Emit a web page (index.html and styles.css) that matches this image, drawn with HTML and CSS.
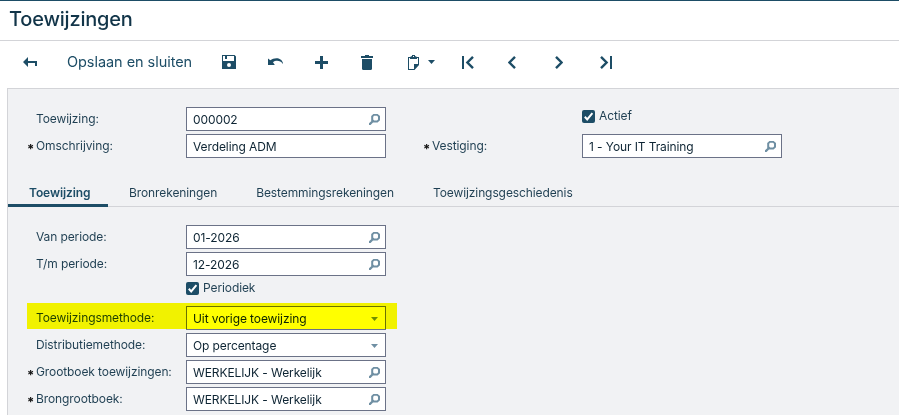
FILE: index.html
```html
<!DOCTYPE html>
<html lang="nl">
<head>
  <meta charset="UTF-8">
  <title>Toewijzingen</title>
  <link rel="stylesheet" href="styles.css">
</head>
<body>

  <svg class="symbols">
    <symbol id="search" viewBox="0 0 12 12">
      <path d="M0 12V10.2L2.2 8.2V3L4.4 1H8.6L11 3V7.2L8.6 9.4H4L1.6 12zM4.2 3.7V6.5L5.2 7.4H8L9 6.5V3.7L8 2.8H5.2z" fill-rule="evenodd" fill="#6f8fa3"/>
    </symbol>
    <symbol id="arrow" viewBox="0 0 7 4">
      <path d="M0 0H7L3.5 4z" fill="#6f8fa3"/>
    </symbol>
  </svg>

  <header class="title-bar">
    <h1>Toewijzingen</h1>
  </header>

  <div class="toolbar">
    <svg class="back" width="14" height="10" viewBox="0 0 14 10"><path d="M0 5L5 0V4H14V9H12V6H5V10z"/></svg>
    <span class="save-close">Opslaan en sluiten</span>
    <svg class="save" width="14" height="14" viewBox="0 0 14 14"><path d="M0 0H12.6L14 1.4V14H0zM1 1V6H12V1H5V4H3V1zM7 8A2 2 0 1 0 7 12A2 2 0 1 0 7 8z" fill-rule="evenodd"/></svg>
    <svg class="undo" width="15" height="8" viewBox="0 0 15 8"><path d="M0 0.6L2.3 2.3C6 -0.6 13.5 -1.2 15 5.3V6C12.5 2.5 8 1.8 5 4.3L6.8 7H0z"/></svg>
    <svg class="plus" width="13" height="13" viewBox="0 0 13 13"><path d="M5 0H8V5H13V8H8V13H5V8H0V5H5z"/></svg>
    <svg class="trash" width="12" height="15" viewBox="0 0 12 15"><path d="M0 1H4V0H8V1H12V3H0zM1 4H11V14L10.2 15H1.8L1 14z"/></svg>
    <svg class="clipboard" width="11" height="15" viewBox="0 0 11 15"><path d="M0 2H2L4 1V0H7V1L9 2H11V10L6.5 15H0zM1 3V14H6V9H10V3H9V4H2V3zM5 1V2H6V1z" fill-rule="evenodd"/></svg>
    <svg class="caret" width="7" height="4" viewBox="0 0 7 4"><path d="M0 0H7L3.5 4z"/></svg>
    <svg class="first" width="12" height="13" viewBox="0 0 12 13"><path d="M0 0H2V13H0z"/><path d="M11 0.9L5.4 6.5L11 12.1" class="line"/></svg>
    <svg class="prev" width="8" height="13" viewBox="0 0 8 13"><path d="M7 0.9L1.4 6.5L7 12.1" class="line"/></svg>
    <svg class="next" width="8" height="13" viewBox="0 0 8 13"><path d="M1 0.9L6.6 6.5L1 12.1" class="line"/></svg>
    <svg class="last" width="12" height="13" viewBox="0 0 12 13"><path d="M10 0H12V13H10z"/><path d="M1 0.9L6.6 6.5L1 12.1" class="line"/></svg>
  </div>

  <main class="panel">
    <div class="summary">
      <div class="column">
        <div class="row">
          <label for="code">Toewijzing:</label>
          <div class="field"><input type="text" id="code" value="000002"><svg class="lookup"><use href="#search"/></svg></div>
        </div>
        <div class="row required">
          <label for="description">Omschrijving:</label>
          <div class="field"><input type="text" id="description" value="Verdeling ADM"></div>
        </div>
      </div>
      <div class="column">
        <div class="row check-row">
          <span class="checkbox"><svg width="13" height="13" viewBox="0 0 13 13"><path d="M2.8 6.8L5.2 9.4L10.4 3.2"/></svg></span>
          <span class="check-text">Actief</span>
        </div>
        <div class="row required">
          <label for="branch">Vestiging:</label>
          <div class="field"><input type="text" id="branch" value="1 - Your IT Training"><svg class="lookup"><use href="#search"/></svg></div>
        </div>
      </div>
    </div>

    <nav class="tabs">
      <a class="tab active">Toewijzing</a>
      <a class="tab">Bronrekeningen</a>
      <a class="tab">Bestemmingsrekeningen</a>
      <a class="tab">Toewijzingsgeschiedenis</a>
    </nav>

    <div class="details">
      <div class="row">
        <label for="from">Van periode:</label>
        <div class="field"><input type="text" id="from" value="01-2026"><svg class="lookup"><use href="#search"/></svg></div>
      </div>
      <div class="row">
        <label for="to">T/m periode:</label>
        <div class="field"><input type="text" id="to" value="12-2026"><svg class="lookup"><use href="#search"/></svg></div>
      </div>
      <div class="row check-row">
        <span class="checkbox"><svg width="13" height="13" viewBox="0 0 13 13"><path d="M2.8 6.8L5.2 9.4L10.4 3.2"/></svg></span>
        <span class="check-text">Periodiek</span>
      </div>
      <div class="row highlight">
        <label for="method">Toewijzingsmethode:</label>
        <div class="field"><input type="text" id="method" value="Uit vorige toewijzing"><svg class="drop"><use href="#arrow"/></svg></div>
      </div>
      <div class="row">
        <label for="distribution">Distributiemethode:</label>
        <div class="field"><input type="text" id="distribution" value="Op percentage"><svg class="drop"><use href="#arrow"/></svg></div>
      </div>
      <div class="row required">
        <label for="ledger">Grootboek toewijzingen:</label>
        <div class="field"><input type="text" id="ledger" value="WERKELIJK - Werkelijk"><svg class="lookup"><use href="#search"/></svg></div>
      </div>
      <div class="row required">
        <label for="source">Brongrootboek:</label>
        <div class="field"><input type="text" id="source" value="WERKELIJK - Werkelijk"><svg class="lookup"><use href="#search"/></svg></div>
      </div>
    </div>
  </main>

</body>
</html>
```
FILE: styles.css
```css
* {
  box-sizing: border-box;
}

body {
  margin: 0;
  height: 415px;
  display: flex;
  flex-direction: column;
  overflow: hidden;
  background-color: #fff;
  color: #1f3f52;
  font-family: Inter, "Liberation Sans", sans-serif;
  font-size: 12px;
  letter-spacing: -0.1px;
}

svg {
  display: block;
  flex: none;
}

.symbols {
  display: none;
}

.title-bar {
  flex: none;
  height: 41px;
  padding: 0 0 3px 9px;
  display: flex;
  align-items: center;
  border-top: 1px solid #1d4d66;
  border-bottom: 1px solid #d3d4d8;
}

h1 {
  margin: 0;
  font-size: 20px;
  font-weight: 500;
  letter-spacing: -0.2px;
  color: #123549;
}

/* toolbar */
.toolbar {
  flex: none;
  height: 47px;
  padding: 0 0 5px 23px;
  display: flex;
  align-items: center;
  fill: #1d4d66;
}

.back {
  margin-bottom: 1px;
}

.save-close {
  margin: 0 0 2px 30px;
  width: 125px;
  font-size: 14.5px;
  white-space: nowrap;
  letter-spacing: -0.05px;
  color: #1d4d66;
}

.save { margin-left: 30px; }
.undo { margin-left: 32px; }
.plus { margin-left: 32px; }
.trash { margin-left: 33px; }
.clipboard { margin-left: 35px; }
.caret { margin-left: 9px; }
.first { margin-left: 27px; }
.prev { margin-left: 34px; }
.next { margin-left: 39px; }
.last { margin-left: 37px; }

.line {
  fill: none;
  stroke: #1d4d66;
  stroke-width: 2.4;
}

/* form panel */
.panel {
  flex: 1;
  margin-left: 7px;
  background-color: #f1f2f4;
  border-top: 1px solid #d3d4d8;
  border-left: 1px solid #d3d4d8;
}

.summary {
  display: flex;
  gap: 37px;
  height: 91px;
  padding: 18px 0 0 19px;
}

.column {
  display: flex;
  flex-direction: column;
  gap: 3px;
}

.row {
  position: relative;
  display: flex;
  align-items: center;
  height: 24px;
  padding-left: 9px;
}

.row label {
  width: 150px;
  padding-bottom: 2px;
  white-space: nowrap;
}

.required::before {
  content: "*";
  position: absolute;
  left: 0;
  top: 6px;
  font-size: 13px;
  font-weight: 700;
  line-height: 18px;
  color: #111;
}

.field {
  display: flex;
  align-items: center;
  width: 200px;
  height: 24px;
  border: 1px solid #6b7287;
  background-color: #fff;
}

input {
  flex: 1;
  min-width: 0;
  height: 22px;
  padding: 0 0 0 6px;
  border: none;
  outline: none;
  background: none;
  font: inherit;
  letter-spacing: inherit;
  color: #0d2433;
}

.lookup {
  width: 12px;
  height: 12px;
  margin-right: 4px;
}

.drop {
  width: 7px;
  height: 4px;
  margin: 2px 7px 0 0;
}

.check-row {
  padding: 0 0 6px 159px;
  gap: 4px;
}

.check-text {
  padding-bottom: 2px;
}

.checkbox {
  width: 13px;
  height: 13px;
  margin-top: 1px;
  border-radius: 2px;
  background-color: #1d4d66;
}

.checkbox path {
  fill: none;
  stroke: #fff;
  stroke-width: 2;
}

/* tabs */
.tabs {
  display: flex;
  height: 27px;
  border-bottom: 1px solid #d3d4d8;
}

.tab {
  height: 27px;
  padding: 5px 18px 0 21px;
  white-space: nowrap;
}

.tab.active {
  width: 100px;
  font-weight: 600;
  color: #1d4d66;
  border-bottom: 3px solid #1d4d66;
}

.details {
  display: flex;
  flex-direction: column;
  gap: 3px;
  padding: 18px 0 0 19px;
}

/* marker stripe over the selected setting */
.highlight::after {
  content: "";
  position: absolute;
  left: 0;
  top: -3px;
  width: 370px;
  height: 26px;
  background-color: #ff0;
  mix-blend-mode: multiply;
}
```
